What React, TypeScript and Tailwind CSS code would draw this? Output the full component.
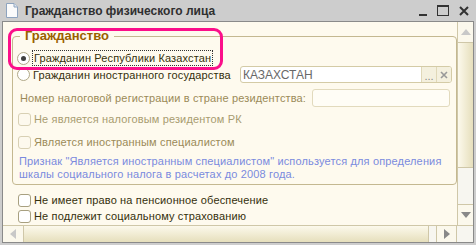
import React from 'react';

const font = { fontFamily: '"Liberation Sans", Arial, sans-serif' };

function Radio({ checked }: { checked?: boolean }) {
  return (
    <span className="w-[13px] h-[13px] rounded-full border border-[#b0a888] bg-white flex items-center justify-center shrink-0">
      {checked && <span className="w-[5px] h-[5px] rounded-full bg-[#404040]" />}
    </span>
  );
}

function Check({ disabled }: { disabled?: boolean }) {
  return (
    <span
      className={
        'w-[13px] h-[13px] rounded-[3px] border shrink-0 ' +
        (disabled ? 'border-[#d8d0b4] bg-[#fdf9ee]' : 'border-[#a8a080] bg-white')
      }
    />
  );
}

function Arrow({ dir }: { dir: 'up' | 'down' | 'left' | 'right' }) {
  const pts = {
    up: '0,6 5,0 10,6',
    down: '0,0 10,0 5,6',
    left: '6,0 6,10 0,5',
    right: '0,0 0,10 6,5',
  }[dir];
  const vert = dir === 'up' || dir === 'down';
  return (
    <svg width={vert ? 10 : 6} height={vert ? 6 : 10}>
      <polygon points={pts} fill={dir === 'right' || dir === 'down' ? '#888' : '#c8c8c8'} />
    </svg>
  );
}

export default function App() {
  return (
    <div className="w-[476px] h-[245px] bg-[#cdcdcd] flex flex-col relative overflow-hidden whitespace-nowrap" style={font}>
      {/* Title bar */}
      <div className="h-[21px] flex items-center pl-[6px] pr-[7px] shrink-0">
        <svg width="12" height="15" viewBox="0 0 12 15" className="mr-[7px]">
          <path d="M0.5 0.5 H8 L11.5 4 V14.5 H0.5 Z" fill="#fbfbfb" stroke="#8ea4bf" />
          <path d="M8 0.5 V4 H11.5" fill="#dde6f0" stroke="#8ea4bf" />
        </svg>
        <span className="text-[12px] font-bold text-[#303030]">Гражданство физического лица</span>
        <div className="ml-auto flex items-center gap-[8px]">
          <span className="w-[8px] h-[2px] bg-[#333] mt-[8px]" />
          <span className="w-[12px] h-[11px] border border-[#333] border-t-2 ml-[2px]" />
          <svg width="10" height="10" viewBox="0 0 10 10" className="ml-[2px]">
            <path d="M1 1 L9 9 M9 1 L1 9" stroke="#333" strokeWidth="2" />
          </svg>
        </div>
      </div>

      {/* Client area */}
      <div className="ml-[2px] mr-[2px] h-[222px] border border-[#8a8a8a] bg-[#fefaee] flex flex-col">
        <div className="flex flex-1 min-h-0">
          <div className="flex-1 overflow-hidden pl-[9px] pt-[7px] text-[11px] text-[#35300c]">
            <fieldset className="w-[445px] h-[156px] border border-[#c4b890] rounded-[4px] pl-[4px]">
              <legend className="ml-[3px] px-[5px] text-[13px] font-bold text-[#9a6000] leading-[14px]">Гражданство</legend>
              <div className="h-[16px] mt-[7px] flex items-center gap-[2px]">
                <Radio checked />
                <span className="border border-dotted border-[#333] px-[1px] leading-[14px] tracking-[0.15px]">Гражданин Республики Казахстан</span>
              </div>
              <div className="h-[17px] flex items-center">
                <Radio />
                <span className="ml-[3px] leading-[14px] w-[207px] tracking-[0.15px]">Гражданин иностранного государства</span>
                <div className="w-[212px] h-[17px] bg-white border border-[#d4cba6] rounded-[3px] flex items-center overflow-hidden">
                  <span className="flex-1 pl-[2px] text-[#686868] text-[12px] leading-[14px]">КАЗАХСТАН</span>
                  <span className="w-[15px] h-full bg-[#f4f0de] border-l border-[#e0d8b8] text-[#888] text-[11px] flex items-end justify-center leading-[12px]">...</span>
                  <span className="w-[15px] h-full bg-[#f4f0de] border-l border-[#e0d8b8] flex items-center justify-center">
                    <svg width="8" height="8" viewBox="0 0 8 8"><path d="M1 1 L7 7 M7 1 L1 7" stroke="#999" strokeWidth="1.6" /></svg>
                  </span>
                </div>
              </div>
              <div className="h-[18px] mt-[6px] flex items-center">
                <span className="ml-[3px] w-[292px] text-[#9b8a58] leading-[14px] tracking-[0.15px]">Номер налоговой регистрации в стране резидентства:</span>
                <span className="w-[138px] h-[18px] border border-[#e2dabd] rounded-[3px] bg-[#fffdf6]" />
              </div>
              <div className="h-[16px] mt-[4px] flex items-center ml-[1px] text-[#a89c70] tracking-[0.15px]">
                <Check disabled />
                <span className="ml-[3px] leading-[14px]">Не является налоговым резидентом РК</span>
              </div>
              <div className="h-[16px] mt-[7px] flex items-center ml-[1px] text-[#9b8a58] tracking-[0.15px]">
                <Check disabled />
                <span className="ml-[3px] leading-[14px]">Является иностранным специалистом</span>
              </div>
              <div className="mt-[5px] ml-[2px] text-[#7a8ade] leading-[13px] tracking-[0.15px]">
                <div>Признак "Является иностранным специалистом" используется для определения</div>
                <div>шкалы социального налога в расчетах до 2008 года.</div>
              </div>
            </fieldset>
            <div className="h-[16px] mt-[7px] flex items-center pl-[6px] tracking-[0.15px]">
              <Check />
              <span className="ml-[3px] leading-[14px]">Не имеет право на пенсионное обеспечение</span>
            </div>
            <div className="h-[16px] flex items-center pl-[6px] tracking-[0.15px]">
              <Check />
              <span className="ml-[3px] leading-[14px]">Не подлежит социальному страхованию</span>
            </div>
          </div>

          {/* Vertical scrollbar */}
          <div className="w-[16px] flex flex-col bg-[#f7f6f0] border-l border-[#cfc7a8]">
            <div className="h-[21px] bg-[#fbf8ec] border-b border-[#cfc7a8] flex items-center justify-center">
              <Arrow dir="up" />
            </div>
            <div className="h-[125px] bg-gradient-to-r from-[#fcf9ec] to-[#e6dfbc] border-b border-[#cfc7a8]" />
            <div className="flex-1" />
            <div className="h-[21px] bg-[#fbf8ec] border-t border-[#cfc7a8] flex items-center justify-center">
              <Arrow dir="down" />
            </div>
          </div>
        </div>

        {/* Horizontal scrollbar */}
        <div className="h-[17px] flex border-t border-[#cfc7a8] bg-[#f7f6f0]">
          <div className="w-[21px] bg-[#fbf8ec] border-r border-[#cfc7a8] flex items-center justify-center">
            <Arrow dir="left" />
          </div>
          <div className="w-[405px] bg-gradient-to-b from-[#fcf9ec] to-[#e6dfbc] border-r border-[#cfc7a8]" />
          <div className="flex-1" />
          <div className="w-[21px] bg-[#fbf8ec] border-l border-r border-[#cfc7a8] flex items-center justify-center">
            <Arrow dir="right" />
          </div>
          <div className="w-[16px] bg-[#f7f6f0]" />
        </div>
      </div>

      {/* Highlight annotation */}
      <div className="absolute left-[8px] top-[28px] w-[215px] h-[42px] border-[3px] border-[#fb0f8a] rounded-[9px] pointer-events-none" />
    </div>
  );
}
